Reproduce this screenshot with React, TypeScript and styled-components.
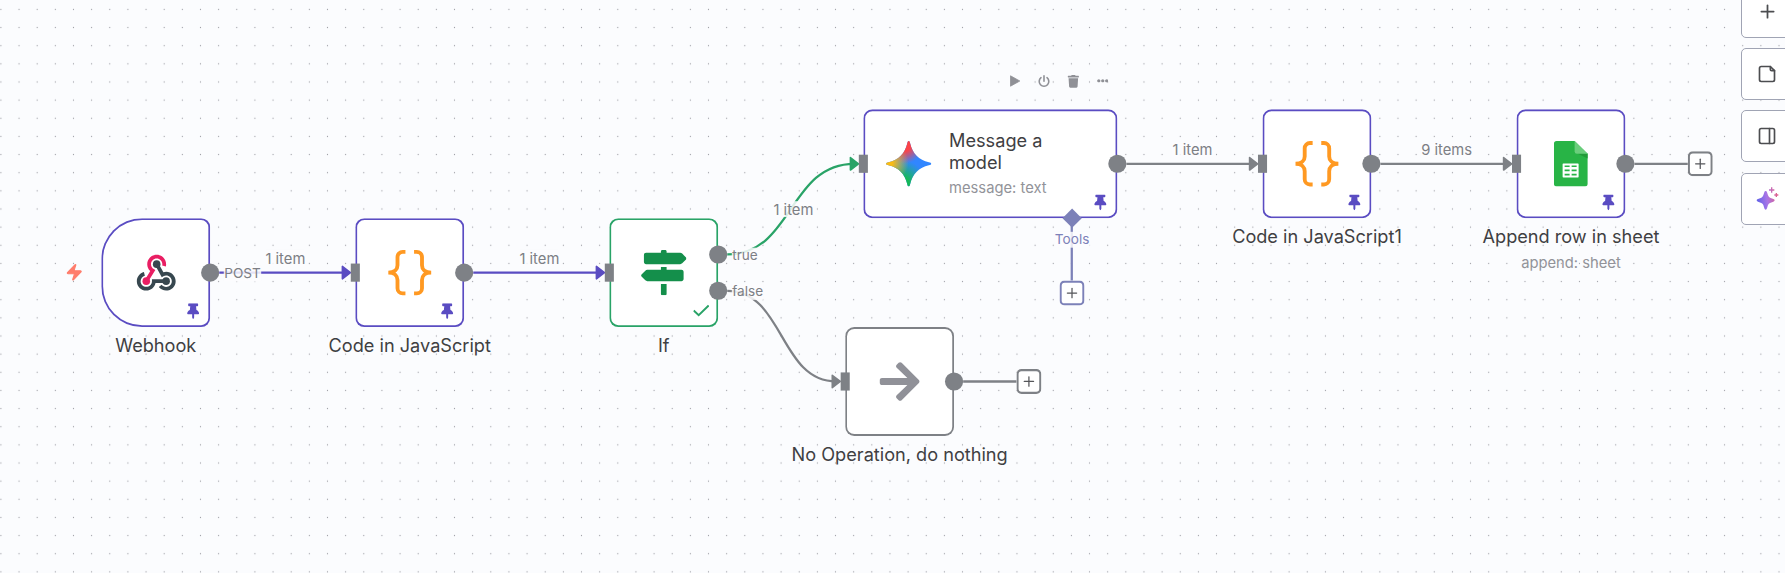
import React from "react";
import styled, { createGlobalStyle } from "styled-components";
import { PanelRight, Plus, Zap } from "lucide-react";
import { FaArrowRight, FaEllipsisH, FaMapSigns, FaThumbtack, FaTrash } from "react-icons/fa";

const GlobalStyle = createGlobalStyle`
  html, body { margin: 0; padding: 0; overflow: hidden; background: #fbfcfe; }
  * { box-sizing: border-box; }
`;

const purple = "#5a4cc2";
const green = "#29a367";
const gray = "#7e8186";
const slate = "#7c81b8";

const Page = styled.main`
  position: relative;
  width: 1785px;
  height: 573px;
  overflow: hidden;
  background: #fbfcfe;
  font-family: Inter, "Liberation Sans", sans-serif;
  color: #3f4042;
`;

const Dots = styled.svg`
  position: absolute;
  inset: 0;
  width: 100%;
  height: 100%;
`;

const Viewport = styled.div`
  position: absolute;
  left: 0;
  top: 0;
  transform-origin: 0 0;
  transform: translate(101.3px, 218.2px) scale(1.134);
`;

const Edges = styled.svg`
  position: absolute;
  left: 0;
  top: 0;
  overflow: visible;
`;

const Node = styled.section<{ $x: number; $y: number; $w?: number }>`
  position: absolute;
  left: ${(p) => p.$x}px;
  top: ${(p) => p.$y}px;
  display: flex;
  flex-direction: column;
  align-items: center;
  gap: 6px;
  width: ${(p) => p.$w ?? 96}px;
`;

const Card = styled.div<{ $color: string; $trigger?: boolean; $wide?: boolean }>`
  position: relative;
  display: flex;
  flex: none;
  align-items: center;
  justify-content: ${(p) => (p.$wide ? "flex-start" : "center")};
  gap: 16px;
  width: 100%;
  height: 96px;
  padding-left: ${(p) => (p.$wide ? "19.6px" : 0)};
  background: #fff;
  border-radius: ${(p) => (p.$trigger ? "36px 8px 8px 36px" : "8px")};
  box-shadow: inset 0 0 0 1.6px ${(p) => p.$color};
`;

const Caption = styled.div`
  display: flex;
  flex-direction: column;
  align-items: center;
  gap: 4px;
  white-space: nowrap;
`;

const Title = styled.div`
  font-size: 16px;
  line-height: 20px;
`;

const Subtitle = styled.div`
  font-size: 13px;
  line-height: 18px;
  color: #929399;
`;

const CardText = styled.div`
  display: flex;
  flex-direction: column;
  gap: 3px;
  width: 100px;
  padding-bottom: 1.4px;
`;

const Status = styled.div<{ $color: string }>`
  position: absolute;
  right: 8px;
  bottom: 7.5px;
  display: flex;
  color: ${(p) => p.$color};
`;

const Input = styled.i`
  position: absolute;
  left: -4.4px;
  top: 40px;
  width: 8.2px;
  height: 16px;
  background: ${gray};
`;

const Output = styled.i<{ $y?: number }>`
  position: absolute;
  right: -8px;
  top: ${(p) => (p.$y ?? 48) - 8}px;
  width: 16px;
  height: 16px;
  border-radius: 50%;
  background: ${gray};
`;

const Diamond = styled.i`
  position: absolute;
  left: 177.7px;
  top: 89.9px;
  width: 12.2px;
  height: 12.2px;
  background: ${slate};
  transform: rotate(45deg);
`;

const Label = styled.span<{ $x: number; $y: number; $kind?: "port" | "tools" }>`
  position: absolute;
  left: ${(p) => p.$x}px;
  top: ${(p) => p.$y}px;
  transform: translate(${(p) => (p.$kind === "port" ? "0" : "-50%")}, -50%);
  background: rgba(251, 252, 254, 0.85);
  color: ${(p) => (p.$kind === "tools" ? slate : "#7d7f85")};
  font-size: ${(p) => (p.$kind ? 12 : 13)}px;
  line-height: 14px;
  white-space: nowrap;
`;

const PlusBox = styled.div<{ $x: number; $y: number; $color: string }>`
  position: absolute;
  left: ${(p) => p.$x - 11}px;
  top: ${(p) => p.$y - 11}px;
  display: flex;
  align-items: center;
  justify-content: center;
  width: 22px;
  height: 22px;
  border-radius: 4.5px;
  background: #fff;
  box-shadow: inset 0 0 0 1.9px ${(p) => p.$color};
  color: #55565a;
`;

const Toolbar = styled.div`
  position: absolute;
  left: 1007.7px;
  top: 73.7px;
  display: grid;
  grid-template-columns: repeat(4, 14px);
  column-gap: 15.3px;
  place-items: center;
  height: 15px;
  color: #8f9096;
`;

const TriggerMark = styled.div`
  position: absolute;
  left: 65px;
  top: 262.7px;
  display: flex;
  color: #ff7d6c;
`;

const SidePanel = styled.aside`
  position: absolute;
  top: -14.5px;
  left: 1741px;
  display: flex;
  flex-direction: column;
  gap: 10.4px;
`;

const PanelButton = styled.button`
  display: flex;
  align-items: center;
  justify-content: center;
  width: 52px;
  height: 52px;
  padding: 0;
  background: #fff;
  border: 1px solid #a0a4b4;
  border-radius: 5px;
  color: #4c4d50;
`;

const Pin = () => (
  <Status $color={purple}>
    <FaThumbtack size={14} />
  </Status>
);

const Check = () => (
  <Status $color={green}>
    <svg width="14" height="14" viewBox="0 0 14 14" fill="none" stroke="currentColor" strokeWidth="1.7">
      <path d="M0.4 6.4 4.8 10.6 13.6 2" />
    </svg>
  </Status>
);

const WebhookIcon = () => (
  <svg width="40" height="40" viewBox="0 0 48 48">
    <g fill="#37474f">
      <circle cx="35" cy="33" r="4" />
      <path d="M35,43c-3,0-5.9-1.4-7.8-3.7l3.1-2.5c1.1,1.4,2.9,2.3,4.7,2.3c3.3,0,6-2.7,6-6s-2.7-6-6-6c-1,0-2,0.3-2.9,0.7l-1.7,1L23.3,16l3.5-1.9l5.3,9.4c1-0.3,2-0.5,3-0.5c5.5,0,10,4.5,10,10S40.5,43,35,43z" />
      <path d="M14,43C8.5,43,4,38.5,4,33c0-4.6,3.1-8.5,7.5-9.7l1,3.9C9.9,27.9,8,30.3,8,33c0,3.3,2.7,6,6,6s6-2.7,6-6v-2h15v4H23.8C22.9,39.6,18.8,43,14,43z" />
    </g>
    <g fill="#e91e63">
      <circle cx="14" cy="33" r="4" />
      <path d="M15.7,34L12.3,32l5.9-9.7c-2-1.9-3.2-4.5-3.2-7.3c0-5.5,4.5-10,10-10s10,4.5,10,10c0,0.9-0.1,1.7-0.3,2.5l-3.9-1c0.1-0.5,0.2-1,0.2-1.5c0-3.3-2.7-6-6-6s-6,2.7-6,6c0,2.1,1.1,4,2.9,5.1l1.7,1L15.7,34z" />
    </g>
    <circle cx="25" cy="15" r="4" fill="#37474f" />
  </svg>
);

const CodeIcon = () => (
  <svg width="40" height="42" viewBox="-20 -21 40 42" fill="none" stroke="#ff9922" strokeWidth="3.4">
    <path d="M-3.8-18.3h-2.4a4.6 4.6 0 0 0-4.6 4.6v7.2c0 3.2-2.4 6.5-8.1 6.5 5.7 0 8.1 3.3 8.1 6.5v7.2a4.6 4.6 0 0 0 4.6 4.6h2.4" />
    <path d="M3.8-18.3h2.4a4.6 4.6 0 0 1 4.6 4.6v7.2c0 3.2 2.4 6.5 8.1 6.5-5.7 0-8.1 3.3-8.1 6.5v7.2a4.6 4.6 0 0 1-4.6 4.6h-2.4" />
  </svg>
);

const star =
  "M20 0C20.8 0 21 1 21.3 2.2 23.3 11 29 16.7 37.8 18.7 39 19 40 19.2 40 20s-1 1-2.2 1.3C29 23.3 23.3 29 21.3 37.8 21 39 20.8 40 20 40s-1-1-1.3-2.2C16.7 29 11 23.3 2.2 21.3 1 21 0 20.8 0 20s1-1 2.2-1.3C11 16.7 16.7 11 18.7 2.2 19 1 19.2 0 20 0z";

const GeminiIcon = () => (
  <svg width="40" height="40" viewBox="0 0 40 40">
    <defs>
      <radialGradient id="gemGreen" gradientUnits="userSpaceOnUse" cx="15" cy="37" r="20">
        <stop offset="0.25" stopColor="#16b957" />
        <stop offset="1" stopColor="#16b957" stopOpacity="0" />
      </radialGradient>
      <radialGradient id="gemRed" gradientUnits="userSpaceOnUse" cx="16" cy="3" r="17">
        <stop offset="0.35" stopColor="#fb4348" />
        <stop offset="1" stopColor="#fb4348" stopOpacity="0" />
      </radialGradient>
      <radialGradient id="gemYellow" gradientUnits="userSpaceOnUse" cx="2" cy="19" r="18">
        <stop offset="0.2" stopColor="#fbbc12" />
        <stop offset="1" stopColor="#fbbc12" stopOpacity="0" />
      </radialGradient>
    </defs>
    <path d={star} fill="#3186ff" />
    <path d={star} fill="url(#gemGreen)" />
    <path d={star} fill="url(#gemRed)" />
    <path d={star} fill="url(#gemYellow)" />
  </svg>
);

const SheetIcon = () => (
  <svg width="29.7" height="40" viewBox="0 0 101 136">
    <path d="M8 0H62L101 38V128a8 8 0 0 1-8 8H8a8 8 0 0 1-8-8V8A8 8 0 0 1 8 0z" fill="#28b446" />
    <path d="M66 35 101 52V37z" fill="#219b38" />
    <path d="M62 0 101 38H69a7 7 0 0 1-7-7z" fill="#6ace7c" />
    <rect x="26" y="67" width="48" height="42" rx="2" fill="#fff" />
    <path d="M32 75.5h15M53 75.5h15M32 88h15M53 88h15M32 100.5h15M53 100.5h15" stroke="#28b446" strokeWidth="5" />
  </svg>
);

const NoteIcon = () => (
  <svg width="20" height="20" viewBox="0 0 24 24" fill="none" stroke="currentColor" strokeWidth="2" strokeLinejoin="round" strokeLinecap="round">
    <path d="M16 3H5a2 2 0 0 0-2 2v14a2 2 0 0 0 2 2h14a2 2 0 0 0 2-2V8z" />
    <path d="M16 3v3.5A1.5 1.5 0 0 0 17.5 8H21" />
  </svg>
);

const SparkleIcon = () => (
  <svg width="23" height="23" viewBox="0 0 69 69">
    <defs>
      <linearGradient id="spark" gradientUnits="userSpaceOnUse" x1="0" y1="40" x2="66" y2="30">
        <stop offset="0" stopColor="#5b60e8" />
        <stop offset="0.5" stopColor="#a875e6" />
        <stop offset="1" stopColor="#e0608a" />
      </linearGradient>
    </defs>
    <g fill="url(#spark)">
      <path d="M29 12q3 0 4 4l3 9q2 5 6 7l10 4q4 1 4 4t-4 4l-10 4q-4 2-6 6l-3 10q-1 4-4 4t-4-4l-3-10q-2-4-6-6L6 44q-4-1-4-4t4-4l10-4q4-2 6-7l3-9q1-4 4-4z" />
      <path d="M45 1h4v6h6v4h-6v6h-4v-6h-6V7h6zM59 18h4v4h4v4h-4v4h-4v-4h-4v-4h4z" />
    </g>
  </svg>
);

type EdgeProps = { d: string; color: string; tip?: [number, number] };
const Edge = ({ d, color, tip }: EdgeProps) => (
  <g stroke={color} fill="none">
    <path d={d} strokeWidth="2" />
    {tip && (
      <path
        d="M-7.4-5.5V5.5L-.3 0z"
        transform={`translate(${tip[0]} ${tip[1]})`}
        fill={color}
        strokeWidth="1.4"
        strokeLinejoin="round"
      />
    )}
  </g>
);

const SmallPlus = () => <Plus size={14} strokeWidth={1.9} />;

export default function App() {
  return (
    <Page>
      <GlobalStyle />
      <Dots>
        <defs>
          <pattern id="dots" x="-8.17" y="0.33" width="18.144" height="18.144" patternUnits="userSpaceOnUse">
            <circle cx="9.072" cy="9.072" r="0.6" fill="#9c9da3" />
          </pattern>
        </defs>
        <rect width="100%" height="100%" fill="url(#dots)" />
      </Dots>

      <TriggerMark>
        <Zap size={18.5} fill="currentColor" strokeWidth={1.5} />
      </TriggerMark>

      <Viewport>
        <Edges width="1" height="1">
          <Edge color={purple} d="M104 48H214" tip={[220, 48]} />
          <Edge color={purple} d="M328 48H438" tip={[444, 48]} />
          <Edge color={green} d="M552 32C610 32 606-48 664-48" tip={[668, -48]} />
          <Edge color={gray} d="M552 64C602 64 598 144 648 144" tip={[652, 144]} />
          <Edge color={gray} d="M904-48H1014" tip={[1020, -48]} />
          <Edge color={gray} d="M1128-48H1238" tip={[1244, -48]} />
          <Edge color={gray} d="M760 144H808" />
          <Edge color={gray} d="M1352-48H1400" />
          <Edge color={slate} d="M855.8 4V56" />
        </Edges>

        <Node $x={0} $y={0}>
          <Card $color={purple} $trigger>
            <WebhookIcon />
            <Output />
            <Pin />
          </Card>
          <Caption><Title>Webhook</Title></Caption>
        </Node>

        <Node $x={224} $y={0}>
          <Card $color={purple}>
            <CodeIcon />
            <Input />
            <Output />
            <Pin />
          </Card>
          <Caption><Title>Code in JavaScript</Title></Caption>
        </Node>

        <Node $x={448} $y={0}>
          <Card $color={green}>
            <FaMapSigns size={40} color="#148f4b" />
            <Input />
            <Output $y={32} />
            <Output $y={64} />
            <Check />
          </Card>
          <Caption><Title>If</Title></Caption>
        </Node>

        <Node $x={656} $y={96}>
          <Card $color={gray}>
            <FaArrowRight size={40} color="#909198" />
            <Input />
            <Output />
          </Card>
          <Caption><Title>No Operation, do nothing</Title></Caption>
        </Node>

        <Node $x={672} $y={-96} $w={224}>
          <Card $color={purple} $wide>
            <GeminiIcon />
            <CardText>
              <Title>Message a model</Title>
              <Subtitle>message: text</Subtitle>
            </CardText>
            <Input />
            <Output />
            <Diamond />
            <Pin />
          </Card>
        </Node>

        <Node $x={1024} $y={-96}>
          <Card $color={purple}>
            <CodeIcon />
            <Input />
            <Output />
            <Pin />
          </Card>
          <Caption><Title>Code in JavaScript1</Title></Caption>
        </Node>

        <Node $x={1248} $y={-96}>
          <Card $color={purple}>
            <SheetIcon />
            <Input />
            <Output />
            <Pin />
          </Card>
          <Caption>
            <Title>Append row in sheet</Title>
            <Subtitle>append: sheet</Subtitle>
          </Caption>
        </Node>

        <Label $x={162.3} $y={35.2}>1 item</Label>
        <Label $x={386.3} $y={35.2}>1 item</Label>
        <Label $x={610.3} $y={-8.3}>1 item</Label>
        <Label $x={962.3} $y={-60.8}>1 item</Label>
        <Label $x={1186.3} $y={-60.8}>9 items</Label>
        <Label $kind="port" $x={108.4} $y={48.5}>POST</Label>
        <Label $kind="port" $x={556.4} $y={32.5}>true</Label>
        <Label $kind="port" $x={556.4} $y={64.5}>false</Label>
        <Label $kind="tools" $x={856.1} $y={18.8}>Tools</Label>

        <PlusBox $x={818.1} $y={144} $color={gray}><SmallPlus /></PlusBox>
        <PlusBox $x={1410.1} $y={-48} $color={gray}><SmallPlus /></PlusBox>
        <PlusBox $x={855.8} $y={66} $color={slate}><SmallPlus /></PlusBox>
      </Viewport>

      <Toolbar>
        <svg width="12" height="12" viewBox="0 0 12 12">
          <path d="M1.5.8 10.8 6 1.5 11.2z" fill="currentColor" stroke="currentColor" strokeWidth=".8" strokeLinejoin="round" />
        </svg>
        <svg width="12" height="13" viewBox="0 0 12 13" fill="none" stroke="currentColor" strokeWidth="1.6" strokeLinecap="round">
          <path d="M6 .9v5.4M3 2.7a4.8 4.8 0 1 0 6 0" />
        </svg>
        <FaTrash size={12.7} />
        <FaEllipsisH size={11.5} />
      </Toolbar>

      <SidePanel>
        <PanelButton><Plus size={21} strokeWidth={2} /></PanelButton>
        <PanelButton><NoteIcon /></PanelButton>
        <PanelButton><PanelRight size={20} strokeWidth={2} /></PanelButton>
        <PanelButton><SparkleIcon /></PanelButton>
      </SidePanel>
    </Page>
  );
}
